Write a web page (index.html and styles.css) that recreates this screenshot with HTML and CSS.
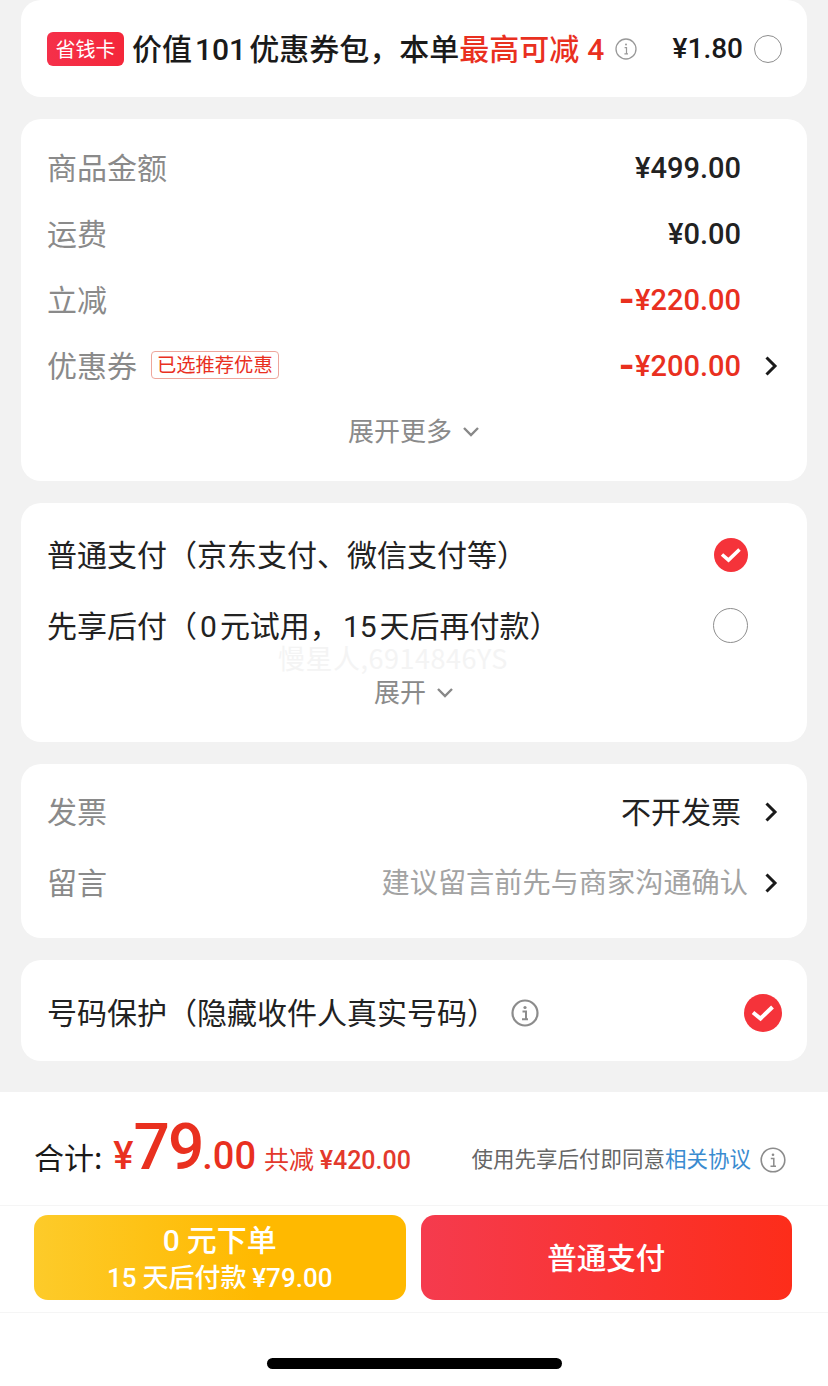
FILE: index.html
```html
<!DOCTYPE html>
<html>
  <head>
    <title>确认订单</title>
    <meta charset="utf-8">
    <link rel="stylesheet" href="styles.css">
  </head>
  <body>
    <div class="page">
      <div class="cards">
        <div class="card card-saver">
          <span class="saver-tag">省钱卡</span>
          <span class="saver-text">价值<span class="num">101</span>优惠券包，本单<span class="red">最高可减<span class="num saver-four">4</span></span></span>
          <svg class="info-small" viewBox="0 0 22 22"><circle cx="11" cy="11" r="10" fill="none" stroke="#999" stroke-width="1.3"/><circle cx="11" cy="6.6" r="1" fill="#999"/><path d="M9.6 9.6h1.9v6M9.4 15.800h3.600" fill="none" stroke="#999" stroke-width="1.2"/></svg>
          <span class="saver-price num push">¥1.80</span>
          <span class="radio radio-small"></span>
        </div>

        <div class="card card-amounts">
          <div class="row"><span class="label">商品金额</span><span class="amount num">¥499.00</span></div>
          <div class="row"><span class="label">运费</span><span class="amount num">¥0.00</span></div>
          <div class="row"><span class="label">立减</span><span class="amount num red"><span class="minus">-</span>¥220.00</span></div>
          <div class="row row-coupon">
            <span class="label">优惠券</span>
            <span class="coupon-tag">已选推荐优惠</span>
            <span class="amount num red push"><span class="minus">-</span>¥200.00</span>
            <svg class="chevron" viewBox="0 0 14 22"><path d="M2.500 2.500 11 11l-8.500 8.500" fill="none" stroke="#1a1a1a" stroke-width="3"/></svg>
          </div>
          <div class="expand expand-more"><span class="expand-text">展开更多</span><svg class="down" viewBox="0 0 18 12"><path d="M2 2l7 7 7-7" fill="none" stroke="#888" stroke-width="2.400"/></svg></div>
        </div>

        <div class="card card-pay">
          <div class="pay-row">
            <span class="pay-text">普通支付（京东支付、微信支付等）</span>
            <svg class="check check-pay" viewBox="0 0 34 34"><circle cx="17" cy="17" r="17" fill="#f5333a"/><path d="M8 16.500l6.500 5.500 11-10.500" fill="none" stroke="#fff" stroke-width="3.600"/></svg>
          </div>
          <div class="pay-row">
            <span class="pay-text">先享后付（<span class="num pay-num">0</span>元试用，<span class="num pay-num">15</span>天后再付款）</span>
            <span class="radio radio-pay"></span>
          </div>
          <div class="expand expand-pay"><span class="expand-text">展开</span><svg class="down" viewBox="0 0 18 12"><path d="M2 2l7 7 7-7" fill="none" stroke="#888" stroke-width="2.400"/></svg></div>
          <div class="watermark">慢星人,6914846YS</div>
        </div>

        <div class="card card-invoice">
          <div class="row row-invoice">
            <span class="label">发票</span>
            <span class="invoice-value push">不开发票</span>
            <svg class="chevron" viewBox="0 0 14 22"><path d="M2.500 2.500 11 11l-8.500 8.500" fill="none" stroke="#1a1a1a" stroke-width="3"/></svg>
          </div>
          <div class="row row-invoice">
            <span class="label">留言</span>
            <span class="note push">建议留言前先与商家沟通确认</span>
            <svg class="chevron chevron-note" viewBox="0 0 14 22"><path d="M2.500 2.500 11 11l-8.500 8.500" fill="none" stroke="#1a1a1a" stroke-width="3"/></svg>
          </div>
        </div>

        <div class="card card-protect">
          <span class="pay-text">号码保护（隐藏收件人真实号码）</span>
          <svg class="info-big" viewBox="0 0 28 28"><circle cx="14" cy="14" r="12.500" fill="none" stroke="#8c8c8c" stroke-width="2.200"/><circle cx="14" cy="8.500" r="1.600" fill="#8c8c8c"/><path d="M11.500 12.500h3.500v7.500M11 20.200h6" fill="none" stroke="#8c8c8c" stroke-width="2"/></svg>
          <svg class="check check-protect push" viewBox="0 0 38 38"><circle cx="19" cy="19" r="19" fill="#f5333a"/><path d="M9 18.500l7.500 6 12-11.500" fill="none" stroke="#fff" stroke-width="4"/></svg>
        </div>
      </div>

      <div class="footer">
        <div class="total-bar">
          <span class="total-label">合计:</span>
          <span class="total-yen num">¥</span><span class="total-big num">79</span><span class="total-dec num">.00</span>
          <span class="total-cut">共减 <span class="num">¥420.00</span></span>
          <span class="agree push">使用先享后付即同意<span class="link">相关协议</span></span>
          <svg class="info-agree" viewBox="0 0 26 26"><circle cx="13" cy="13" r="11.800" fill="none" stroke="#8c8c8c" stroke-width="1.600"/><circle cx="13" cy="7.800" r="1.300" fill="#8c8c8c"/><path d="M10.800 11.500h3v7.500M10.500 19.200h5.500" fill="none" stroke="#8c8c8c" stroke-width="1.500"/></svg>
        </div>
        <div class="buttons">
          <div class="btn btn-later">
            <span class="later-main"><span class="num">0</span> 元下单</span>
            <span class="later-sub"><span class="num">15</span> 天后付款 <span class="num">¥79.00</span></span>
          </div>
          <div class="btn btn-now"><span class="now-text">普通支付</span></div>
        </div>
        <div class="home-area"><div class="home-bar"></div></div>
      </div>
    </div>
  </body>
</html>
```

FILE: styles.css
```css
html, body {
  margin: 0;
  padding: 0;
}
body {
  font-family: "Noto Sans CJK SC", "Noto Sans", sans-serif;
  background-color: #f2f2f2;
  color: #222222;
}
.page {
  width: 828px;
  height: 1386px;
  overflow: hidden;
  display: flex;
  flex-direction: column;
}
.cards {
  display: flex;
  flex-direction: column;
  gap: 22px;
  padding: 0 21px;
  height: 1092px;
  box-sizing: border-box;
}
.card {
  position: relative;
  background-color: #ffffff;
  border-radius: 20px;
  box-sizing: border-box;
}
.num {
  font-family: Roboto, sans-serif;
}
.push {
  margin-left: auto;
}

/* saver card */
.card-saver {
  height: 97px;
  display: flex;
  align-items: center;
  padding: 0 25px 0 26px;
}
.saver-tag {
  width: 77px;
  height: 34px;
  border-radius: 6px;
  background: linear-gradient(90deg, #f5304a, #f4273a);
  color: #ffffff;
  font-size: 20px;
  line-height: 34px;
  text-align: center;
}
.saver-text {
  margin-left: 8px;
  font-size: 30px;
  line-height: 40px;
  font-weight: 500;
  white-space: nowrap;
  color: #1a1a1a;
}
.saver-text .num {
  font-weight: 500;
  margin: 0 3px;
}
.saver-text .saver-four {
  margin: 0 0 0 8px;
}
.info-small {
  width: 22px;
  height: 22px;
  margin-left: 11px;
}
.saver-price {
  font-size: 28px;
  font-weight: 500;
  color: #1a1a1a;
}
.radio {
  display: block;
  box-sizing: border-box;
  border: 1.500px solid #8e8e8e;
  border-radius: 50%;
}
.radio-small {
  width: 28px;
  height: 28px;
  margin-left: 11px;
}

/* amounts */
.card-amounts {
  height: 362px;
  padding: 16px 26px 0;
}
.row {
  display: flex;
  align-items: center;
  justify-content: space-between;
  height: 66px;
}
.label {
  font-size: 30px;
  color: #8a8a8a;
  white-space: nowrap;
  margin-bottom: 4px;
}
.amount {
  font-size: 29px;
  line-height: 38px;
  font-weight: 500;
  color: #222222;
  margin-right: 40px;
}
.red {
  color: #e9301f;
}
.minus {
  font-size: 44px;
  line-height: 30px;
  vertical-align: -4px;
  margin-right: 1px;
}
.row-coupon {
  justify-content: flex-start;
}
.row-coupon .amount {
  margin-right: 0;
}
.coupon-tag {
  margin-left: 14px;
  margin-bottom: 2px;
  padding: 0 5px;
  height: 26px;
  line-height: 25px;
  border: 1px solid #eea69c;
  border-radius: 4px;
  font-size: 19.300px;
  color: #e9301f;
  white-space: nowrap;
}
.chevron {
  width: 14px;
  height: 22px;
  margin-left: 23px;
  margin-right: 3px;
}
.expand {
  display: flex;
  align-items: center;
  justify-content: center;
  color: #8a8a8a;
  white-space: nowrap;
}
.expand-text {
  font-size: 26px;
  line-height: 30px;
  margin-bottom: 4px;
}
.expand-more {
  height: 66px;
}
.down {
  width: 18px;
  height: 12px;
  margin-left: 10px;
}

/* pay methods */
.card-pay {
  height: 239px;
  padding: 16px 26px 0;
}
.pay-row {
  display: flex;
  align-items: center;
  justify-content: space-between;
  height: 71px;
}
.pay-text {
  font-size: 30px;
  color: #222222;
  white-space: nowrap;
  margin-bottom: 4px;
}
.pay-num {
  margin: 0 3px;
}
.check-pay {
  width: 34px;
  height: 34px;
  margin-right: 33px;
}
.radio-pay {
  width: 35px;
  height: 35px;
  margin-right: 33px;
}
.expand-pay {
  margin-top: 10px;
  height: 44px;
}
.watermark {
  position: absolute;
  left: 257px;
  top: 143px;
  font-size: 27px;
  line-height: 24px;
  letter-spacing: 0.500px;
  color: #f4f4f4;
  white-space: nowrap;
}

/* invoice */
.card-invoice {
  height: 174px;
  padding: 12px 26px 0;
}
.row-invoice {
  height: 71px;
  justify-content: flex-start;
}
.invoice-value {
  font-size: 30px;
  color: #222222;
  margin-bottom: 4px;
}
.note {
  font-size: 28.200px;
  color: #a3a3a3;
  white-space: nowrap;
  margin-bottom: 4px;
}
.chevron-note {
  margin-left: 16px;
}

/* protect */
.card-protect {
  height: 101px;
  display: flex;
  align-items: center;
  padding: 4px 25px 0 26px;
}
.info-big {
  width: 28px;
  height: 28px;
  margin-left: 14px;
}
.check-protect {
  width: 38px;
  height: 38px;
}

/* footer */
.footer {
  flex: 1;
  background-color: #ffffff;
}
.total-bar {
  height: 114px;
  display: flex;
  align-items: baseline;
  padding: 23px 42px 0 34px;
  box-sizing: border-box;
  border-bottom: 1px solid #f5f5f5;
  white-space: nowrap;
}
.total-label {
  font-size: 30px;
  color: #1a1a1a;
}
.total-yen {
  margin-left: 11px;
  font-size: 38px;
  font-weight: 500;
  color: #e9301f;
}
.total-big {
  font-size: 64px;
  line-height: 66px;
  letter-spacing: -2px;
  font-weight: 500;
  color: #e9301f;
}
.total-dec {
  font-size: 38px;
  font-weight: 500;
  color: #e9301f;
}
.total-cut {
  margin-left: 8px;
  font-size: 25px;
  color: #e3392c;
}
.total-cut .num {
  font-weight: 500;
}
.agree {
  font-size: 21.500px;
  color: #666666;
  position: relative;
  top: -2px;
}
.link {
  color: #3a8bd0;
}
.info-agree {
  width: 26px;
  height: 26px;
  margin-left: 9px;
  align-self: center;
}
.buttons {
  display: flex;
  gap: 15px;
  height: 107px;
  padding: 9px 36px 12px 34px;
  box-sizing: border-box;
  border-bottom: 1px solid #f5f5f5;
}
.btn {
  flex: 1;
  border-radius: 14px;
  color: #ffffff;
  display: flex;
  flex-direction: column;
  align-items: center;
  justify-content: center;
  white-space: nowrap;
  font-weight: 500;
}
.btn-later {
  background: linear-gradient(90deg, #fdcb2a, #ffb900 60%);
  padding-bottom: 2px;
  box-sizing: border-box;
}
.later-main {
  font-size: 30px;
  line-height: 38px;
}
.later-sub {
  font-size: 26px;
  line-height: 32px;
}
.btn-now {
  background: linear-gradient(90deg, #f53b4e, #fd2d1a);
}
.now-text {
  font-size: 29.500px;
  margin-bottom: 4px;
}
.home-area {
  padding-top: 45px;
  padding-left: 267px;
}
.home-bar {
  width: 295px;
  height: 11px;
  border-radius: 6px;
  background-color: #000000;
}
```
